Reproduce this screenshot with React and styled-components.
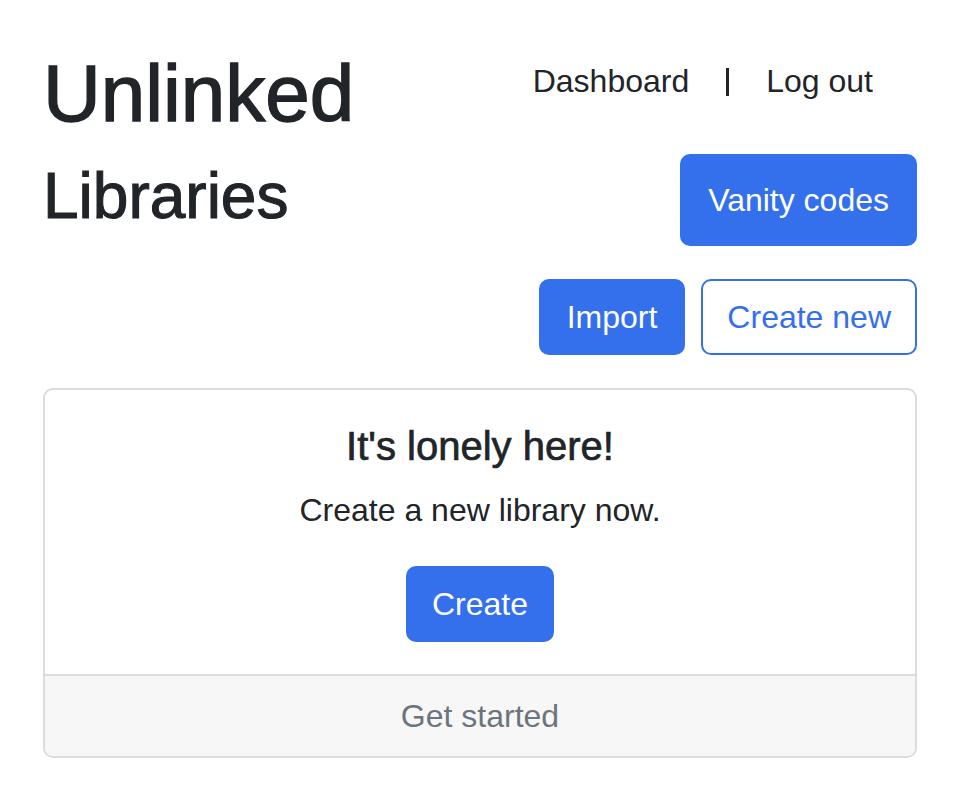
import React from 'react';
import styled, { createGlobalStyle } from 'styled-components';

const GlobalStyle = createGlobalStyle`
  body {
    margin: 0;
    background: #fff;
    color: #212529;
    font-family: "Liberation Sans", Arial, sans-serif;
  }
`;

const Page = styled.div`
  padding: 46px 45px 40px 43px;
`;

const Header = styled.header`
  display: flex;
  justify-content: space-between;
  align-items: flex-start;
`;

const Brand = styled.div`
  display: flex;
  flex-direction: column;
`;

// headings are medium weight in the original; Liberation has no 500, so thicken a little
const Title = styled.h1`
  margin: 0 0 16px;
  font-size: 80px;
  font-weight: 500;
  line-height: 1.2;
  -webkit-text-stroke: 1.4px #212529;
`;

const Subtitle = styled.h2`
  margin: 0;
  font-size: 64px;
  font-weight: 500;
  line-height: 1.2;
  -webkit-text-stroke: 1.1px #212529;
`;

const Side = styled.div`
  display: flex;
  flex-direction: column;
  align-items: flex-end;
`;

const Nav = styled.nav`
  display: flex;
  align-items: center;
  gap: 37px;
  padding: 11px 44px 0 0;
  font-size: 32px;
  line-height: 48px;
`;

const NavLink = styled.a`
  color: #212529;
  text-decoration: none;
`;

const Divider = styled.span`
  display: block;
  width: 3px;
  height: 28px;
  margin-top: 1px;
  background: #212529;
`;

const Button = styled.button`
  font-family: inherit;
  font-size: 32px;
  line-height: 48px;
  padding: ${p => (p.$tall ? '20px' : '12px')} ${p => p.$px || 24}px;
  border: 2px solid #3470ec;
  border-radius: 10px;
  background: ${p => (p.$outline ? '#fff' : '#3470ec')};
  color: ${p => (p.$outline ? '#3470ec' : '#fff')};
  cursor: pointer;
`;

const VanityButton = styled(Button)`
  margin-top: 49px;
`;

const Actions = styled.div`
  display: flex;
  justify-content: flex-end;
  gap: 16px;
  margin-top: 33px;
`;

const Card = styled.section`
  margin-top: 33px;
  border: 2px solid #dcdcdc;
  border-radius: 10px;
  overflow: hidden;
`;

const CardBody = styled.div`
  padding: 32px;
  text-align: center;
`;

const CardTitle = styled.h5`
  margin: 0 0 16px;
  font-size: 40px;
  font-weight: 500;
  line-height: 1.2;
  -webkit-text-stroke: 0.7px #212529;
`;

const CardText = styled.p`
  margin: 0 0 32px;
  font-size: 32px;
  line-height: 48px;
`;

const CardFooter = styled.div`
  padding: 16px 32px;
  background: #f7f7f7;
  border-top: 2px solid #dcdcdc;
  color: #6c757d;
  text-align: center;
  font-size: 32px;
  line-height: 48px;
`;

export default function App() {
  return (
    <>
      <GlobalStyle />
      <Page>
        <Header>
          <Brand>
            <Title>Unlinked</Title>
            <Subtitle>Libraries</Subtitle>
          </Brand>
          <Side>
            <Nav>
              <NavLink href="#">Dashboard</NavLink>
              <Divider />
              <NavLink href="#">Log out</NavLink>
            </Nav>
            <VanityButton $tall $px={26}>Vanity codes</VanityButton>
          </Side>
        </Header>

        <Actions>
          <Button $px={26}>Import</Button>
          <Button $outline>Create new</Button>
        </Actions>

        <Card>
          <CardBody>
            <CardTitle>It's lonely here!</CardTitle>
            <CardText>Create a new library now.</CardText>
            <Button>Create</Button>
          </CardBody>
          <CardFooter>Get started</CardFooter>
        </Card>
      </Page>
    </>
  );
}
